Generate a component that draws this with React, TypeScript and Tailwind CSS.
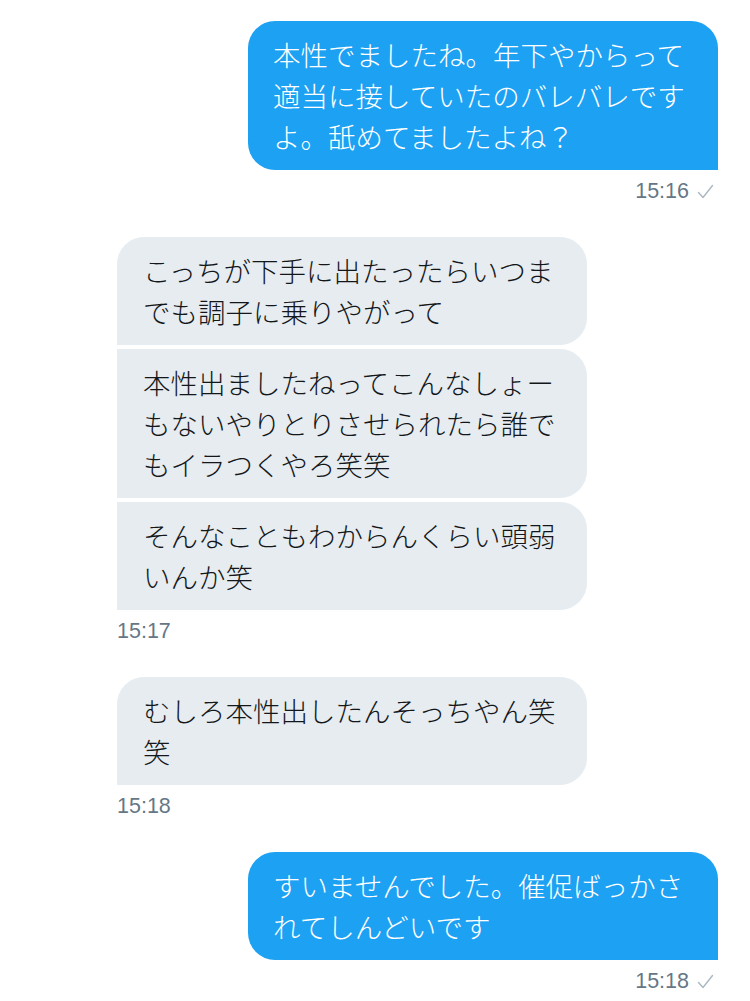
import React from "react";

const jp = { fontFamily: '"Noto Sans CJK JP", "Noto Sans", sans-serif' };
const lat = { fontFamily: '"Liberation Sans", Arial, sans-serif' };

function Lines({ lines }: { lines: string[] }) {
  return (
    <>
      {lines.map((l, i) => (
        <div key={i} className="whitespace-nowrap">
          {l}
        </div>
      ))}
    </>
  );
}

function Sent({ lines }: { lines: string[] }) {
  return (
    <div
      style={jp}
      className="w-[470px] bg-[#1da1f2] text-white font-light text-[27.5px] leading-[41px] pl-[25px] pr-[20px] py-[13px] rounded-tl-[27px] rounded-tr-[27px] rounded-bl-[27px] rounded-br-none"
    >
      <Lines lines={lines} />
    </div>
  );
}

function Received({ lines, cls }: { lines: string[]; cls: string }) {
  return (
    <div
      style={jp}
      className={`w-[470px] bg-[#e6ecf0] text-[#14171a] font-light text-[27.5px] leading-[41px] pl-[26px] pr-[20px] py-[13px] rounded-tr-[27px] rounded-br-[27px] ${cls}`}
    >
      <Lines lines={lines} />
    </div>
  );
}

function Check() {
  return (
    <svg width="17" height="15" viewBox="0 0 17 15" className="ml-[8px]">
      <polyline
        points="1.5,8.5 6,13.5 15.5,1.5"
        fill="none"
        stroke="#aab8c2"
        strokeWidth="1.4"
        strokeLinecap="round"
        strokeLinejoin="round"
      />
    </svg>
  );
}

function TimeRight({ t }: { t: string }) {
  return (
    <div className="flex justify-end items-center mt-[9px] h-[24px] pr-[4px]">
      <span style={lat} className="text-[21.5px] leading-[24px] text-[#657786]">
        {t}
      </span>
      <Check />
    </div>
  );
}

function TimeLeft({ t }: { t: string }) {
  return (
    <div className="flex items-center mt-[9px] h-[24px]">
      <span style={lat} className="text-[21.5px] leading-[24px] text-[#657786]">
        {t}
      </span>
    </div>
  );
}

export default function App() {
  return (
    <div className="w-[750px] h-[1001px] bg-white overflow-hidden pt-[21px]">
      <div className="flex flex-col items-end pr-[32px] mb-[34px]">
        <Sent
          lines={[
            "本性でましたね。年下やからって",
            "適当に接していたのバレバレです",
            "よ。舐めてましたよね？",
          ]}
        />
        <TimeRight t="15:16" />
      </div>

      <div className="flex flex-col items-start pl-[117px] mb-[34px]">
        <div className="flex flex-col gap-[4px]">
          <Received
            cls="rounded-tl-[27px] rounded-bl-none"
            lines={["こっちが下手に出たったらいつま", "でも調子に乗りやがって"]}
          />
          <Received
            cls="rounded-tl-none rounded-bl-none"
            lines={[
              "本性出ましたねってこんなしょー",
              "もないやりとりさせられたら誰で",
              "もイラつくやろ笑笑",
            ]}
          />
          <Received
            cls="rounded-tl-none rounded-bl-none"
            lines={["そんなこともわからんくらい頭弱", "いんか笑"]}
          />
        </div>
        <TimeLeft t="15:17" />
      </div>

      <div className="flex flex-col items-start pl-[117px] mb-[34px]">
        <Received
          cls="rounded-tl-[27px] rounded-bl-none"
          lines={["むしろ本性出したんそっちやん笑", "笑"]}
        />
        <TimeLeft t="15:18" />
      </div>

      <div className="flex flex-col items-end pr-[32px]">
        <Sent lines={["すいませんでした。催促ばっかさ", "れてしんどいです"]} />
        <TimeRight t="15:18" />
      </div>
    </div>
  );
}
